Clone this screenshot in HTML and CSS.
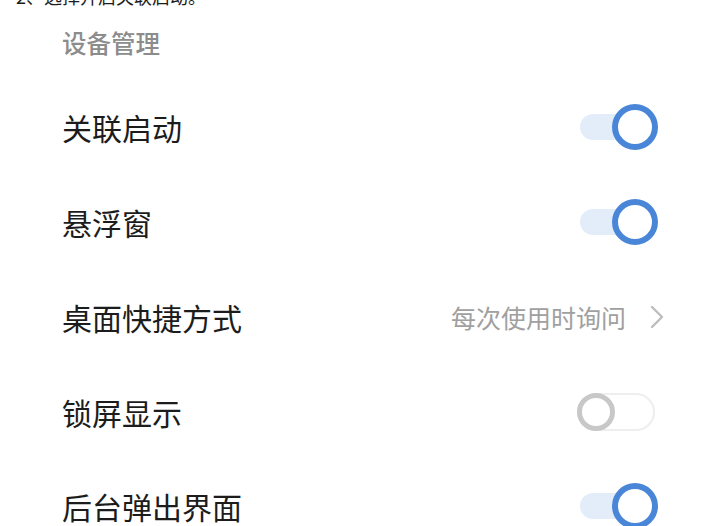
FILE: index.html
```html
<!DOCTYPE html>
<html lang="zh-CN">
<head>
<meta charset="utf-8">
<link rel="stylesheet" href="styles.css">
</head>
<body>
<div class="prev"><span class="prev-text">2、选择开启关联启动。</span></div>
<div class="section-title">设备管理</div>
<div class="row">
  <span class="label">关联启动</span>
  <span class="toggle on"><span class="track"></span><span class="knob"></span></span>
</div>
<div class="row">
  <span class="label">悬浮窗</span>
  <span class="toggle on"><span class="track"></span><span class="knob"></span></span>
</div>
<div class="row">
  <span class="label">桌面快捷方式</span>
  <span class="value">每次使用时询问
    <svg class="chev" width="16" height="26" viewBox="0 0 16 26"><path d="M3 3 L13 13 L3 23" fill="none" stroke="#bdbdbd" stroke-width="2.4" stroke-linecap="round" stroke-linejoin="round"/></svg>
  </span>
</div>
<div class="row">
  <span class="label">锁屏显示</span>
  <span class="toggle off"><span class="knob"></span></span>
</div>
<div class="row">
  <span class="label">后台弹出界面</span>
  <span class="toggle on"><span class="track"></span><span class="knob"></span></span>
</div>
</body>
</html>
```
FILE: styles.css
```css
html, body {
  margin: 0;
  padding: 0;
  background: #ffffff;
}
body {
  width: 705px;
  height: 526px;
  overflow: hidden;
  font-family: "Noto Sans CJK SC", "Noto Sans", sans-serif;
  color: #1c1c1c;
}
.prev {
  height: 8px;
  overflow: hidden;
  padding-left: 16px;
}
.prev-text {
  display: block;
  font-size: 18px;
  line-height: 20px;
  margin-top: -14px;
  color: #1c1c1c;
}
.section-title {
  padding: 18px 0 20px 62px;
  font-size: 24.5px;
  line-height: 34px;
  color: #8c8c8c;
  font-weight: 500;
}
.row {
  height: 94.75px;
  display: flex;
  align-items: center;
  justify-content: space-between;
  padding: 0 47px 0 62px;
}
.label {
  font-size: 30px;
  line-height: 40px;
  color: #1c1c1c;
}
.toggle {
  position: relative;
  display: block;
  width: 78px;
}
.toggle.on {
  height: 46px;
}
.toggle.on .track {
  position: absolute;
  left: 0;
  top: 10px;
  width: 62px;
  height: 26px;
  border-radius: 13px;
  background: #e3edfa;
}
.toggle.on .knob {
  position: absolute;
  right: 0;
  top: 0;
  width: 34px;
  height: 34px;
  border: 6px solid #4a86d8;
  border-radius: 50%;
  background: #ffffff;
}
.toggle.off {
  height: 38px;
  margin-right: 3px;
  box-sizing: border-box;
  border: 2px solid #eeeeee;
  border-radius: 19px;
}
.toggle.off .knob {
  position: absolute;
  left: -2px;
  top: -2px;
  width: 28px;
  height: 28px;
  border: 5px solid #c8c8c8;
  border-radius: 50%;
  background: #ffffff;
}
.value {
  display: flex;
  align-items: center;
  gap: 23px;
  font-size: 25px;
  line-height: 34px;
  color: #a0a0a0;
  margin-right: -7px;
}
.chev {
  display: block;
}
```
